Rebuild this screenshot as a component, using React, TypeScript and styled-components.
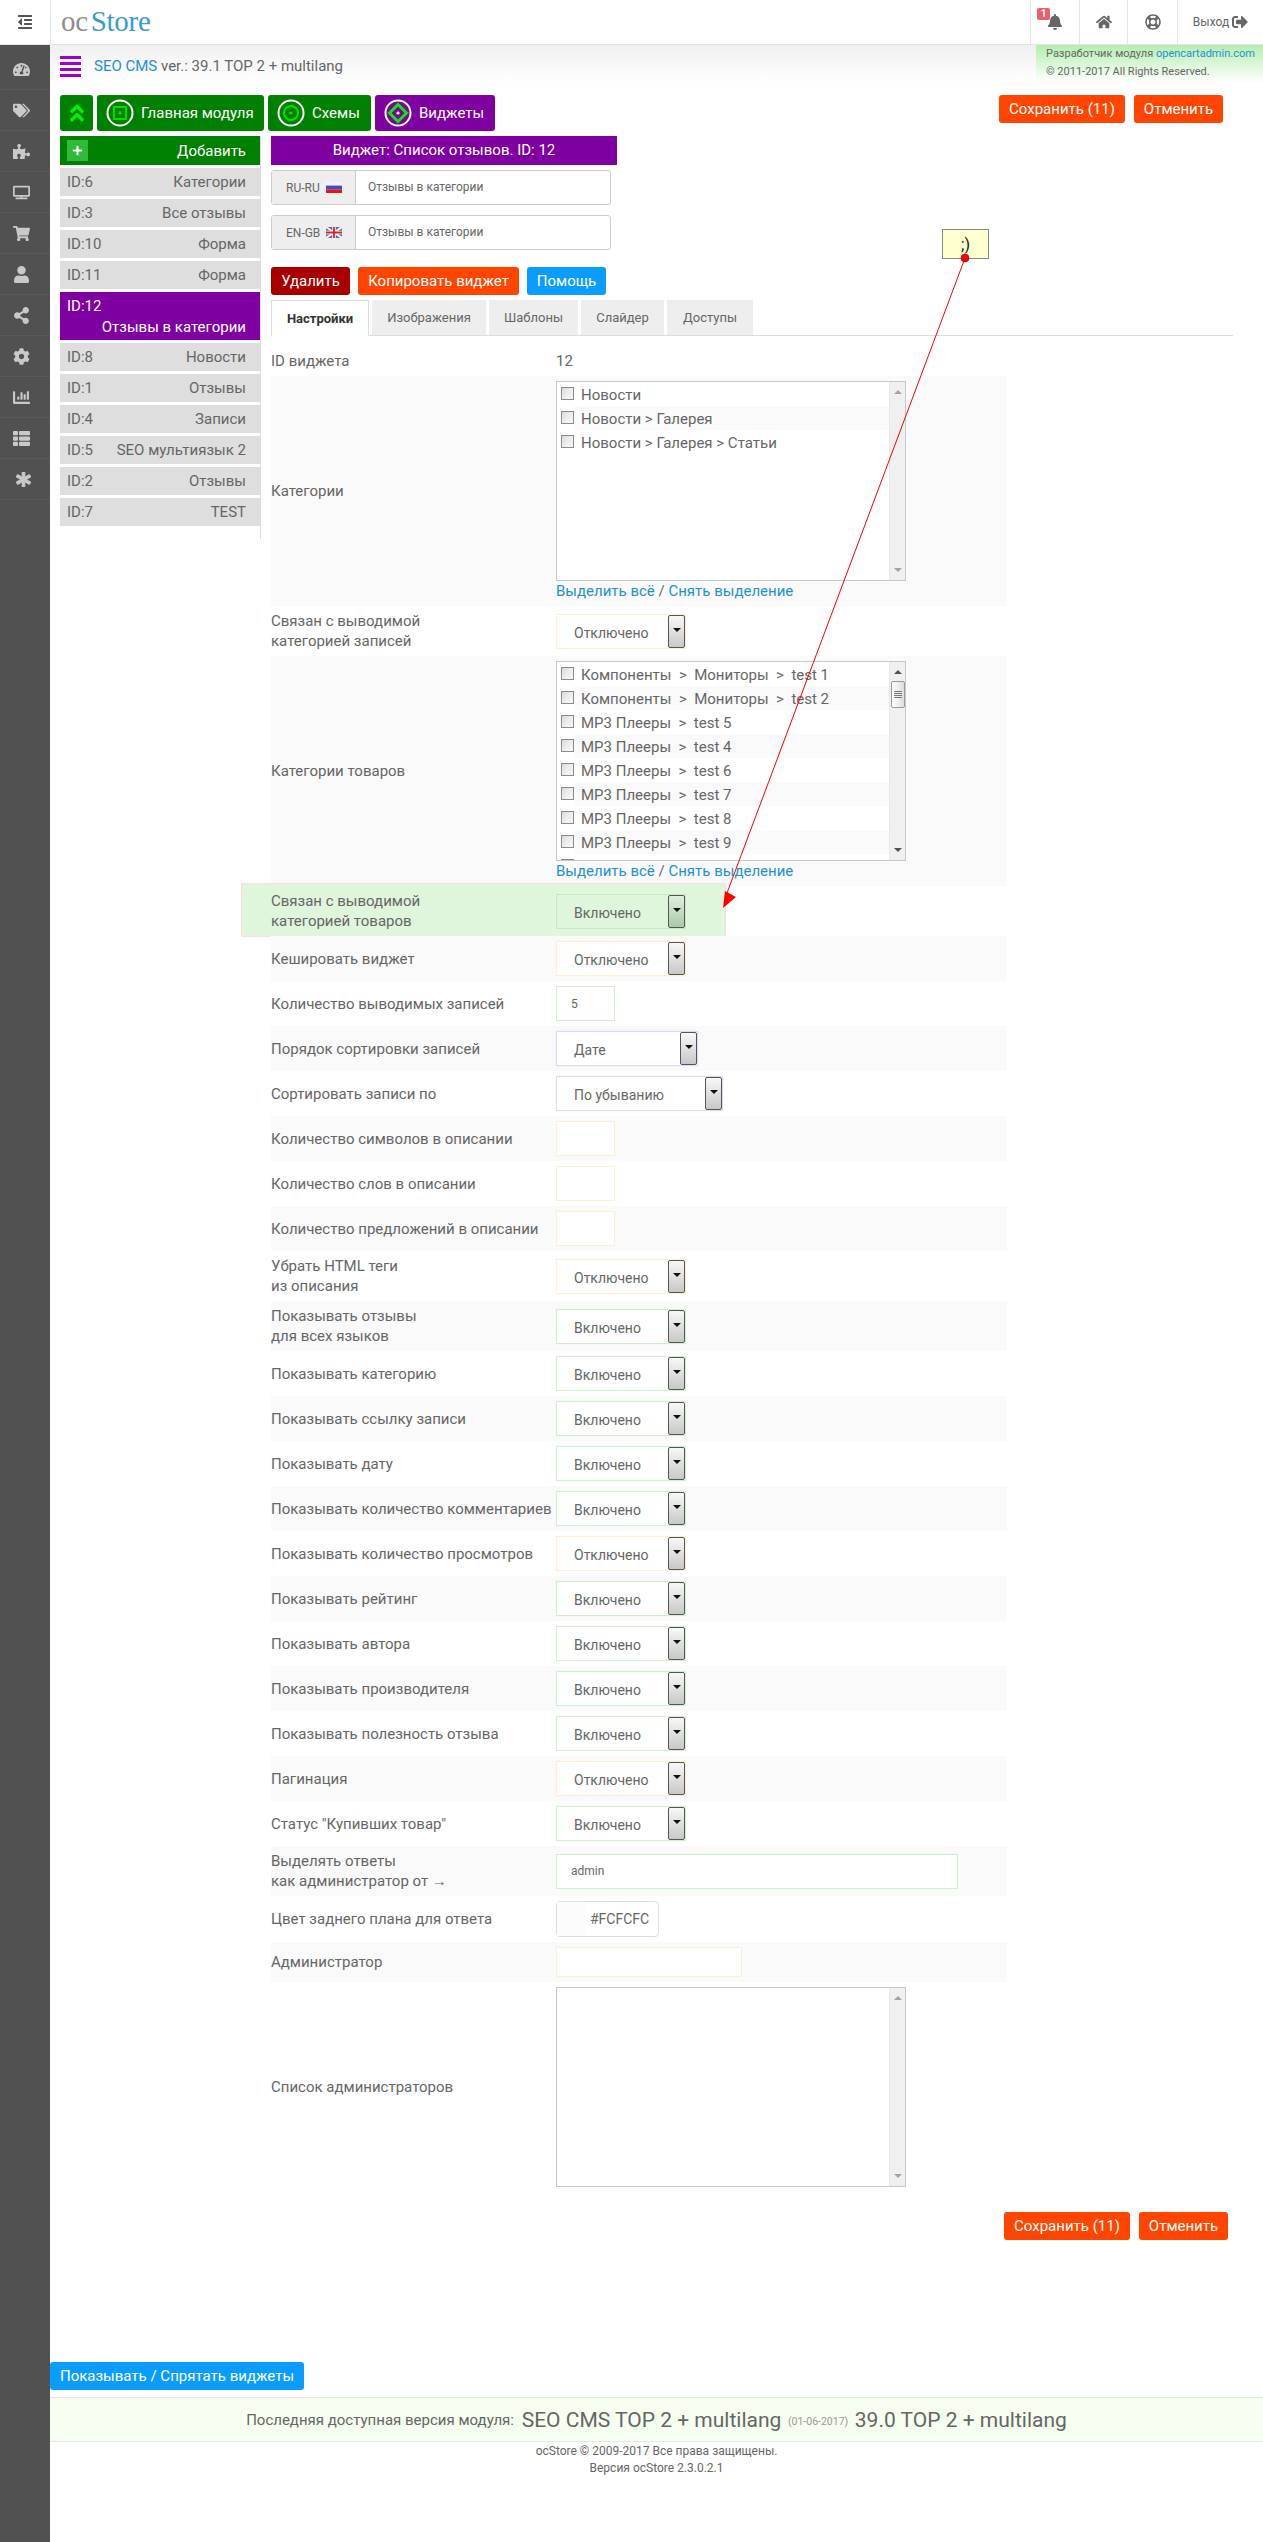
import styled, { createGlobalStyle } from "styled-components";
import {
    FaAngleDoubleUp,
    FaAsterisk,
    FaBell,
    FaChartBar,
    FaCog,
    FaHome,
    FaOutdent,
    FaPlus,
    FaPuzzlePiece,
    FaRegLifeRing,
    FaShareAlt,
    FaShoppingCart,
    FaSignOutAlt,
    FaTachometerAlt,
    FaTags,
    FaThList,
    FaTv,
    FaUser,
} from "react-icons/fa";

const GlobalStyle = createGlobalStyle`
    html, body { margin: 0; padding: 0; background: #fff; }
    * { box-sizing: border-box; }
    body { font-family: Roboto, "Liberation Sans", sans-serif; font-size: 14px; color: #666; }
`;

const Page = styled.div`
    position: relative;
    width: 1263px;
    height: 2542px;
    overflow: hidden;
`;

const TopBar = styled.header`
    display: flex;
    align-items: stretch;
    height: 45px;
    border-bottom: 1px solid #e6e6e6;
    background: #fff;
`;

const Toggle = styled.div`
    width: 51px;
    display: flex;
    align-items: center;
    justify-content: center;
    border-right: 1px solid #e6e6e6;
    color: #555;
    font-size: 16px;
`;

const Logo = styled.div`
    margin-left: 10px;
    font-family: "Liberation Serif", serif;
    font-size: 29px;
    line-height: 42px;
    color: #8d8d8d;
    letter-spacing: -0.3px;

    span {
        color: #3a9ccb;
        margin-left: 3px;
    }
`;

const TopNav = styled.nav`
    margin-left: auto;
    display: flex;
`;

const TopNavItem = styled.div<{ $w: number }>`
    position: relative;
    width: ${(p) => p.$w}px;
    display: flex;
    align-items: center;
    justify-content: center;
    gap: 3px;
    border-left: 1px solid #e6e6e6;
    color: #666;
    font-size: 16px;
`;

const NavBadge = styled.span`
    position: absolute;
    left: 6px;
    top: 8px;
    width: 13px;
    height: 12px;
    border-radius: 2px;
    background: #e8606c;
    color: #fff;
    font-size: 10px;
    font-weight: 700;
    line-height: 12px;
    text-align: center;
`;

const LogoutText = styled.span`
    font-size: 12px;
`;

const Body = styled.div`
    display: flex;
    height: 2497px;
`;

const Sidebar = styled.aside`
    width: 50px;
    flex-shrink: 0;
    padding-top: 4px;
    background: #515151;
`;

const SideItem = styled.div`
    height: 41px;
    padding-left: 13px;
    display: flex;
    align-items: center;
    border-bottom: 1px solid #5a5a5a;
    color: #c9c9c9;
    font-size: 17px;
`;

const BoldAsterisk = styled(FaAsterisk)`
    margin-left: 3px;
    font-size: 15px;
    stroke: currentColor;
    stroke-width: 40px;
`;

const Content = styled.main`
    flex: 1;
    min-width: 0;
`;

const SubHeader = styled.div`
    height: 38px;
    display: flex;
    align-items: center;
    padding-left: 10px;
    background: linear-gradient(#f0f0f0, #fff);
`;

const MenuBars = styled.div`
    width: 21px;
    height: 21px;
    margin: 4px 13px 0 0;
    background: repeating-linear-gradient(#a000c8 0 3px, transparent 3px 6px);
`;

const PageTitle = styled.div`
    font-size: 15px;
    margin-top: 3px;

    span {
        color: #1e91cf;
    }
`;

const DevBox = styled.div`
    margin-left: auto;
    width: 227px;
    height: 38px;
    padding-left: 10px;
    font-size: 11px;
    line-height: 18px;
    white-space: nowrap;
    color: #666;
    background: linear-gradient(#b5eeb0, #fff);

    a {
        color: #1e91cf;
    }
`;

const Toolbar = styled.div`
    display: flex;
    align-items: flex-start;
    gap: 4px;
    margin-top: 12px;
    height: 36px;
    padding: 0 40px 0 10px;
`;

const NavButton = styled.div<{ $bg: string; $w: number }>`
    width: ${(p) => p.$w}px;
    height: 36px;
    display: flex;
    align-items: center;
    justify-content: ${(p) => (p.$w < 40 ? "center" : "flex-start")};
    gap: 7px;
    padding-left: ${(p) => (p.$w < 40 ? 0 : 9)}px;
    border-radius: 3px;
    background: ${(p) => p.$bg};
    color: #fff;
    font-size: 15px;
`;

const BrightArrow = styled.span`
    color: #00f000;
    font-size: 22px;
    line-height: 0;
`;

const SaveGroup = styled.div`
    margin-left: auto;
    display: flex;
    gap: 9px;
`;

const ActionButton = styled.div<{ $bg: string; $w: number }>`
    width: ${(p) => p.$w}px;
    height: 28px;
    border-radius: 3px;
    background: ${(p) => p.$bg};
    color: #fff;
    font-size: 15px;
    line-height: 28px;
    text-align: center;
`;

const Columns = styled.div`
    display: flex;
    margin-top: 5px;
    padding-left: 10px;
`;

const WidgetColumn = styled.div`
    width: 201px;
    height: 403px;
    flex-shrink: 0;
    border-right: 1px solid #ddd;
    margin-right: 10px;
`;

const AddRow = styled.div`
    width: 200px;
    height: 29px;
    margin-bottom: 3px;
    display: flex;
    align-items: center;
    justify-content: space-between;
    padding: 0 14px 0 7px;
    background: #008000;
    color: #fff;
    font-size: 15px;
`;

const AddIcon = styled.span`
    width: 21px;
    height: 21px;
    display: flex;
    align-items: center;
    justify-content: center;
    background: #2fbb35;
    font-size: 11px;
`;

const WidgetRow = styled.div<{ $active?: boolean }>`
    width: 200px;
    height: ${(p) => (p.$active ? 48 : 28)}px;
    margin-bottom: 3px;
    padding: ${(p) => (p.$active ? "4px 14px 0 7px" : "0 14px 0 7px")};
    display: ${(p) => (p.$active ? "block" : "flex")};
    align-items: center;
    justify-content: space-between;
    background: ${(p) => (p.$active ? "#7f00a0" : "#dedede")};
    color: ${(p) => (p.$active ? "#fff" : "#666")};
    font-size: 15px;
    line-height: 20px;
`;

const WidgetName = styled.div`
    text-align: right;
    margin-top: 1px;
`;

const Editor = styled.div`
    width: 962px;
`;

const TitleBar = styled.div`
    width: 346px;
    height: 29px;
    margin-bottom: 5px;
    background: #7f00a0;
    color: #fff;
    font-size: 15px;
    line-height: 29px;
    text-align: center;
`;

const LangInput = styled.div`
    width: 340px;
    height: 35px;
    margin-bottom: 10px;
    display: flex;
    border: 1px solid #ccc;
    border-radius: 3px;
    font-size: 12px;
    background: #fff;
`;

const LangAddon = styled.div`
    width: 84px;
    display: flex;
    align-items: center;
    gap: 6px;
    padding-left: 14px;
    background: #eee;
    border-right: 1px solid #ccc;
`;

const LangValue = styled.div`
    padding-left: 12px;
    line-height: 33px;
`;

const ActionRow = styled.div`
    display: flex;
    gap: 8px;
    margin-top: 17px;
`;

const Tabs = styled.div`
    display: flex;
    gap: 3px;
    width: 962px;
    height: 36px;
    margin-top: 5px;
    border-bottom: 1px solid #ddd;
`;

const Tab = styled.div<{ $active?: boolean; $w: number }>`
    width: ${(p) => p.$w}px;
    height: ${(p) => (p.$active ? 36 : 35)}px;
    background: ${(p) => (p.$active ? "#fff" : "#eee")};
    border: ${(p) => (p.$active ? "1px solid #ddd" : "0")};
    border-bottom: 0;
    color: ${(p) => (p.$active ? "#333" : "#666")};
    font-size: 13px;
    font-weight: ${(p) => (p.$active ? 700 : 400)};
    line-height: 35px;
    text-align: center;
`;

const Form = styled.div`
    width: 736px;
    margin-top: 10px;
`;

const FieldRow = styled.div<{ $highlight?: boolean }>`
    position: relative;
    display: flex;
    align-items: center;
    padding: 5px 0;
    line-height: 20px;
    font-size: 15px;

    &:nth-child(even) {
        background: #fafafa;
    }

    ${(p) =>
        p.$highlight &&
        `
        &::before {
            content: "";
            position: absolute;
            left: -30px;
            top: -3px;
            width: 483px;
            height: 52px;
            background: #dff5dc;
            border: 1px solid #fcdcdc;
        }
    `}
`;

const FieldLabel = styled.div`
    position: relative;
    width: 285px;
    flex-shrink: 0;
    white-space: pre-line;
`;

const FieldValue = styled.div`
    position: relative;
`;

const tints = {
    on: { border: "#d3efd1", glow: "#eef9ec" },
    off: { border: "#fdeed6", glow: "#fff9ee" },
    neutral: { border: "#dedaf5", glow: "#f1f0fc" },
    plain: { border: "#ddd", glow: "#fafafa" },
};

type Tint = keyof typeof tints;

const SelectBox = styled.div<{ $w: number; $tint: Tint; $green?: boolean }>`
    position: relative;
    width: ${(p) => p.$w}px;
    height: 35px;
    display: flex;
    justify-content: space-between;
    padding-left: 17px;
    font-size: 14px;
    line-height: 37px;
    background: ${(p) => (p.$green ? "#dff5dc" : "#fff")};
    border: 1px solid ${(p) => (p.$green ? "#c5e8c2" : tints[p.$tint].border)};
    box-shadow: 0 0 2px ${(p) => tints[p.$tint].glow};
`;

const SelectArrow = styled.span<{ $green?: boolean }>`
    width: 17px;
    height: 33px;
    display: flex;
    justify-content: center;
    padding-top: 12px;
    border: 1px solid #555;
    border-radius: 2px;
    background: ${(p) =>
        p.$green
            ? "linear-gradient(#dff0dc, #a9c9a9)"
            : "linear-gradient(#f8f8f8, #c8c8c8)"};

    &::after {
        content: "";
        width: 0;
        height: 0;
        border-left: 4px solid transparent;
        border-right: 4px solid transparent;
        border-top: 4px solid #111;
    }
`;

const TextBox = styled.input<{ $w: number; $h?: number; $tint: Tint }>`
    display: block;
    width: ${(p) => p.$w}px;
    height: ${(p) => p.$h ?? 35}px;
    padding: 0 14px;
    background: #fff;
    border: 1px solid ${(p) => tints[p.$tint].border};
    font-family: inherit;
    font-size: 12px;
    color: #666;
    outline: none;
`;

const ColorBox = styled.div`
    width: 103px;
    height: 36px;
    display: flex;
    align-items: center;
    border: 1px solid #ddd;
    border-radius: 4px;
    background: #fff;
    font-size: 14px;

    span {
        width: 28px;
        height: 34px;
        margin-right: 5px;
        background: #fcfcfc;
    }
`;

const ListBox = styled.div`
    width: 350px;
    height: 200px;
    display: flex;
    border: 1px solid #c8c8c8;
    background: #fff;
`;

const ListItems = styled.div`
    flex: 1;
    overflow: hidden;
`;

const ListItem = styled.div`
    height: 24px;
    display: flex;
    align-items: flex-start;
    padding-left: 4px;
    font-size: 15px;
    line-height: 26px;
    white-space: pre;

    &:nth-child(even) {
        background: linear-gradient(to right, #fff 17px, #fafafa 17px);
    }
`;

const CheckBox = styled.span`
    width: 13px;
    height: 13px;
    margin: 5px 7px 0 0;
    flex-shrink: 0;
    border: 1px solid #8a8a8a;
    background: linear-gradient(135deg, #dcdcdc, #fbfbfb);
`;

const ScrollBar = styled.div`
    width: 16px;
    flex-shrink: 0;
    display: flex;
    flex-direction: column;
    align-items: center;
    justify-content: flex-start;
    background: #f0f0f0;
    border-left: 1px solid #e8e8e8;
`;

const ScrollUp = styled.span<{ $dark?: boolean }>`
    width: 0;
    height: 0;
    margin-top: 8px;
    border-left: 4px solid transparent;
    border-right: 4px solid transparent;
    border-bottom: 4px solid ${(p) => (p.$dark ? "#505050" : "#a3a3a3")};
`;

const ScrollDown = styled.span<{ $dark?: boolean }>`
    width: 0;
    height: 0;
    margin-top: auto;
    margin-bottom: 8px;
    border-left: 4px solid transparent;
    border-right: 4px solid transparent;
    border-top: 4px solid ${(p) => (p.$dark ? "#505050" : "#a3a3a3")};
`;

const ScrollThumb = styled.span`
    width: 14px;
    height: 27px;
    margin-top: 7px;
    border: 1px solid #9a9a9a;
    border-radius: 2px;
    background:
        repeating-linear-gradient(#777 0 1px, transparent 1px 2px) center / 8px 7px no-repeat,
        linear-gradient(to right, #fff, #ddd);
`;

const LinkLine = styled.div`
    font-size: 15px;
    color: #666;

    a {
        color: #1e91cf;
    }
`;

const AreaBox = styled.div`
    width: 350px;
    height: 200px;
    display: flex;
    justify-content: flex-end;
    border: 1px solid #c8c8c8;
    background: #fff;
`;

const BottomSave = styled.div`
    display: flex;
    justify-content: flex-end;
    gap: 9px;
    width: 957px;
    margin-top: 20px;
`;

const ToggleWidgets = styled.div`
    width: 254px;
    height: 28px;
    margin-top: 122px;
    border-radius: 3px;
    background: #0a9dff;
    color: #fff;
    font-size: 15px;
    line-height: 28px;
    text-align: center;
`;

const VersionBar = styled.div`
    height: 45px;
    margin-top: 7px;
    display: flex;
    align-items: center;
    justify-content: center;
    gap: 4px;
    background: #f6fef1;
    border-top: 1px solid #e3ebe0;
    border-bottom: 1px solid #e3ebe0;
    font-size: 15px;
    white-space: pre;
`;

const VersionBig = styled.span`
    font-size: 21px;
`;

const VersionDate = styled.span`
    font-size: 10.5px;
    color: #999;
    margin-top: 4px;
`;

const Footer = styled.div`
    padding-top: 1px;
    text-align: center;
    font-size: 12px;
    line-height: 17px;
`;

const NoteBox = styled.div`
    position: absolute;
    left: 942px;
    top: 229px;
    width: 47px;
    height: 30px;
    border: 1px solid #888;
    background: #ffffd0;
    color: #111;
    font-size: 16px;
    line-height: 30px;
    text-align: center;
`;

const ArrowLayer = styled.svg`
    position: absolute;
    left: 0;
    top: 0;
    pointer-events: none;
`;

const RingIcon = ({ shape }: { shape: "square" | "circle" | "diamond" }) => (
    <svg width="28" height="28" viewBox="0 0 28 28">
        <circle cx="14" cy="14" r="12.5" fill="none" stroke="#fff" strokeWidth="2" />
        {shape === "square" && (
            <>
                <rect x="8" y="8" width="12" height="12" fill="none" stroke="#00e000" strokeWidth="2" />
                <rect x="12.5" y="12.5" width="3" height="3" fill="#00e000" />
            </>
        )}
        {shape === "circle" && (
            <>
                <circle cx="14" cy="14" r="7" fill="none" stroke="#00e000" strokeWidth="2" />
                <circle cx="14" cy="14" r="1.6" fill="#00e000" />
            </>
        )}
        {shape === "diamond" && (
            <>
                <path d="M14 5.5 22.5 14 14 22.5 5.5 14Z" fill="none" stroke="#00f000" strokeWidth="3" />
                <circle cx="14" cy="14" r="1.6" fill="#fff" />
            </>
        )}
    </svg>
);

const FlagRu = () => (
    <svg width="16" height="11" viewBox="0 0 16 11">
        <rect width="16" height="11" fill="#f4f4f8" />
        <rect y="3.6" width="16" height="3.7" fill="#3a4fd0" />
        <rect y="7.3" width="16" height="3.7" fill="#e01a1a" />
    </svg>
);

const FlagEn = () => (
    <svg width="16" height="11" viewBox="0 0 16 11">
        <rect width="16" height="11" fill="#5a6aa8" />
        <path d="M0 0 16 11M16 0 0 11" stroke="#fff" strokeWidth="2" />
        <path d="M8 0V11M0 5.5H16" stroke="#fff" strokeWidth="3.5" />
        <path d="M8 0V11M0 5.5H16" stroke="#e02020" strokeWidth="1.8" />
    </svg>
);

const sideIcons = [
    FaTachometerAlt,
    FaTags,
    FaPuzzlePiece,
    FaTv,
    FaShoppingCart,
    FaUser,
    FaShareAlt,
    FaCog,
    FaChartBar,
    FaThList,
    BoldAsterisk,
];

const widgets = [
    ["ID:6", "Категории"],
    ["ID:3", "Все отзывы"],
    ["ID:10", "Форма"],
    ["ID:11", "Форма"],
    ["ID:12", "Отзывы в категории", "active"],
    ["ID:8", "Новости"],
    ["ID:1", "Отзывы"],
    ["ID:4", "Записи"],
    ["ID:5", "SEO мультиязык 2"],
    ["ID:2", "Отзывы"],
    ["ID:7", "TEST"],
];

const newsCategories = ["Новости", "Новости > Галерея", "Новости > Галерея > Статьи"];

// the last row is cut off by the box, only its checkbox top shows
const productCategories = [
    "Компоненты  >  Мониторы  >  test 1",
    "Компоненты  >  Мониторы  >  test 2",
    "МР3 Плееры  >  test 5",
    "МР3 Плееры  >  test 4",
    "МР3 Плееры  >  test 6",
    "МР3 Плееры  >  test 7",
    "МР3 Плееры  >  test 8",
    "МР3 Плееры  >  test 9",
    "",
];

const toggleRows: [string, boolean][] = [
    ["Показывать отзывы\nдля всех языков", true],
    ["Показывать категорию", true],
    ["Показывать ссылку записи", true],
    ["Показывать дату", true],
    ["Показывать количество комментариев", true],
    ["Показывать количество просмотров", false],
    ["Показывать рейтинг", true],
    ["Показывать автора", true],
    ["Показывать производителя", true],
    ["Показывать полезность отзыва", true],
    ["Пагинация", false],
    ['Статус "Купивших товар"', true],
];

const Select = ({
    text,
    w = 130,
    tint,
    green,
}: {
    text: string;
    w?: number;
    tint: Tint;
    green?: boolean;
}) => (
    <SelectBox $w={w} $tint={tint} $green={green}>
        {text}
        <SelectArrow $green={green} />
    </SelectBox>
);

const OnOff = ({ on }: { on: boolean }) => (
    <Select text={on ? "Включено" : "Отключено"} tint={on ? "on" : "off"} />
);

const Field = ({
    label,
    children,
    highlight,
}: {
    label: string;
    children: React.ReactNode;
    highlight?: boolean;
}) => (
    <FieldRow $highlight={highlight}>
        <FieldLabel>{label}</FieldLabel>
        <FieldValue>{children}</FieldValue>
    </FieldRow>
);

const CheckList = ({ items, thumb }: { items: string[]; thumb?: boolean }) => (
    <>
        <ListBox>
            <ListItems>
                {items.map((item, i) => (
                    <ListItem key={i}>
                        <CheckBox />
                        {item}
                    </ListItem>
                ))}
            </ListItems>
            <ScrollBar>
                <ScrollUp $dark={thumb} />
                {thumb && <ScrollThumb />}
                <ScrollDown $dark={thumb} />
            </ScrollBar>
        </ListBox>
        <LinkLine>
            <a>Выделить всё</a> / <a>Снять выделение</a>
        </LinkLine>
    </>
);

const App = () => {
    return (
        <Page>
            <GlobalStyle />
            <TopBar>
                <Toggle>
                    <FaOutdent />
                </Toggle>
                <Logo>
                    oc<span>Store</span>
                </Logo>
                <TopNav>
                    <TopNavItem $w={49}>
                        <NavBadge>1</NavBadge>
                        <FaBell />
                    </TopNavItem>
                    <TopNavItem $w={48}>
                        <FaHome />
                    </TopNavItem>
                    <TopNavItem $w={50}>
                        <FaRegLifeRing />
                    </TopNavItem>
                    <TopNavItem $w={86}>
                        <LogoutText>Выход</LogoutText>
                        <FaSignOutAlt />
                    </TopNavItem>
                </TopNav>
            </TopBar>
            <Body>
                <Sidebar>
                    {sideIcons.map((Icon, i) => (
                        <SideItem key={i}>
                            <Icon />
                        </SideItem>
                    ))}
                </Sidebar>
                <Content>
                    <SubHeader>
                        <MenuBars />
                        <PageTitle>
                            <span>SEO CMS</span> ver.: 39.1 TOP 2 + multilang
                        </PageTitle>
                        <DevBox>
                            Разработчик модуля <a>opencartadmin.com</a>
                            <br />© 2011-2017 All Rights Reserved.
                        </DevBox>
                    </SubHeader>
                    <Toolbar>
                        <NavButton $bg="#008000" $w={33}>
                            <BrightArrow>
                                <FaAngleDoubleUp />
                            </BrightArrow>
                        </NavButton>
                        <NavButton $bg="#008000" $w={167}>
                            <RingIcon shape="square" />
                            Главная модуля
                        </NavButton>
                        <NavButton $bg="#008000" $w={103}>
                            <RingIcon shape="circle" />
                            Схемы
                        </NavButton>
                        <NavButton $bg="#7f00a0" $w={120}>
                            <RingIcon shape="diamond" />
                            Виджеты
                        </NavButton>
                        <SaveGroup>
                            <ActionButton $bg="#ff4500" $w={126}>
                                Сохранить (11)
                            </ActionButton>
                            <ActionButton $bg="#ff4500" $w={89}>
                                Отменить
                            </ActionButton>
                        </SaveGroup>
                    </Toolbar>
                    <Columns>
                        <WidgetColumn>
                            <AddRow>
                                <AddIcon>
                                    <FaPlus />
                                </AddIcon>
                                Добавить
                            </AddRow>
                            {widgets.map(([id, name, active]) => (
                                <WidgetRow key={id} $active={!!active}>
                                    {id}
                                    {active ? <WidgetName>{name}</WidgetName> : <span>{name}</span>}
                                </WidgetRow>
                            ))}
                        </WidgetColumn>
                        <Editor>
                            <TitleBar>Виджет: Список отзывов. ID: 12</TitleBar>
                            <LangInput>
                                <LangAddon>
                                    RU-RU <FlagRu />
                                </LangAddon>
                                <LangValue>Отзывы в категории</LangValue>
                            </LangInput>
                            <LangInput>
                                <LangAddon>
                                    EN-GB <FlagEn />
                                </LangAddon>
                                <LangValue>Отзывы в категории</LangValue>
                            </LangInput>
                            <ActionRow>
                                <ActionButton $bg="#a80000" $w={79}>
                                    Удалить
                                </ActionButton>
                                <ActionButton $bg="#ff4500" $w={161}>
                                    Копировать виджет
                                </ActionButton>
                                <ActionButton $bg="#0a9dff" $w={79}>
                                    Помощь
                                </ActionButton>
                            </ActionRow>
                            <Tabs>
                                <Tab $active $w={98}>
                                    Настройки
                                </Tab>
                                <Tab $w={114}>Изображения</Tab>
                                <Tab $w={89}>Шаблоны</Tab>
                                <Tab $w={83}>Слайдер</Tab>
                                <Tab $w={86}>Доступы</Tab>
                            </Tabs>
                            <Form>
                                <Field label="ID виджета">12</Field>
                                <Field label="Категории">
                                    <CheckList items={newsCategories} />
                                </Field>
                                <Field label={"Связан с выводимой\nкатегорией записей"}>
                                    <OnOff on={false} />
                                </Field>
                                <Field label="Категории товаров">
                                    <CheckList items={productCategories} thumb />
                                </Field>
                                <Field label={"Связан с выводимой\nкатегорией товаров"} highlight>
                                    <Select text="Включено" tint="on" green />
                                </Field>
                                <Field label="Кешировать виджет">
                                    <OnOff on={false} />
                                </Field>
                                <Field label="Количество выводимых записей">
                                    <TextBox $w={59} $tint="on" defaultValue="5" />
                                </Field>
                                <Field label="Порядок сортировки записей">
                                    <Select text="Дате" w={142} tint="neutral" />
                                </Field>
                                <Field label="Сортировать записи по">
                                    <Select text="По убыванию" w={167} tint="neutral" />
                                </Field>
                                <Field label="Количество символов в описании">
                                    <TextBox $w={59} $tint="off" />
                                </Field>
                                <Field label="Количество слов в описании">
                                    <TextBox $w={59} $tint="off" />
                                </Field>
                                <Field label="Количество предложений в описании">
                                    <TextBox $w={59} $tint="off" />
                                </Field>
                                <Field label={"Убрать HTML теги\nиз описания"}>
                                    <OnOff on={false} />
                                </Field>
                                {toggleRows.map(([label, on]) => (
                                    <Field key={label} label={label}>
                                        <OnOff on={on} />
                                    </Field>
                                ))}
                                <Field label={"Выделять ответы\nкак администратор от →"}>
                                    <TextBox $w={402} $tint="on" defaultValue="admin" />
                                </Field>
                                <Field label="Цвет заднего плана для ответа">
                                    <ColorBox>
                                        <span />
                                        #FCFCFC
                                    </ColorBox>
                                </Field>
                                <Field label="Администратор">
                                    <TextBox $w={186} $h={30} $tint="off" />
                                </Field>
                                <Field label="Список администраторов">
                                    <AreaBox>
                                        <ScrollBar>
                                            <ScrollUp />
                                            <ScrollDown />
                                        </ScrollBar>
                                    </AreaBox>
                                </Field>
                            </Form>
                            <BottomSave>
                                <ActionButton $bg="#ff4500" $w={126}>
                                    Сохранить (11)
                                </ActionButton>
                                <ActionButton $bg="#ff4500" $w={89}>
                                    Отменить
                                </ActionButton>
                            </BottomSave>
                        </Editor>
                    </Columns>
                    <ToggleWidgets>Показывать / Спрятать виджеты</ToggleWidgets>
                    <VersionBar>
                        Последняя доступная версия модуля: <VersionBig>SEO CMS TOP 2 + multilang</VersionBig>
                        <VersionDate> (01-06-2017) </VersionDate>
                        <VersionBig>39.0 TOP 2 + multilang</VersionBig>
                    </VersionBar>
                    <Footer>
                        ocStore © 2009-2017 Все права защищены.
                        <br />
                        Версия ocStore 2.3.0.2.1
                    </Footer>
                </Content>
            </Body>
            <NoteBox>;)</NoteBox>
            <ArrowLayer width="1263" height="2542">
                <line x1="965" y1="258" x2="727" y2="893" stroke="#f00" strokeWidth="1" />
                <path d="M723 908 736 897 725 891Z" fill="#f00" />
                <circle cx="965" cy="258" r="4" fill="#f00" stroke="#800" strokeWidth="0.5" />
            </ArrowLayer>
        </Page>
    );
};

export default App;
